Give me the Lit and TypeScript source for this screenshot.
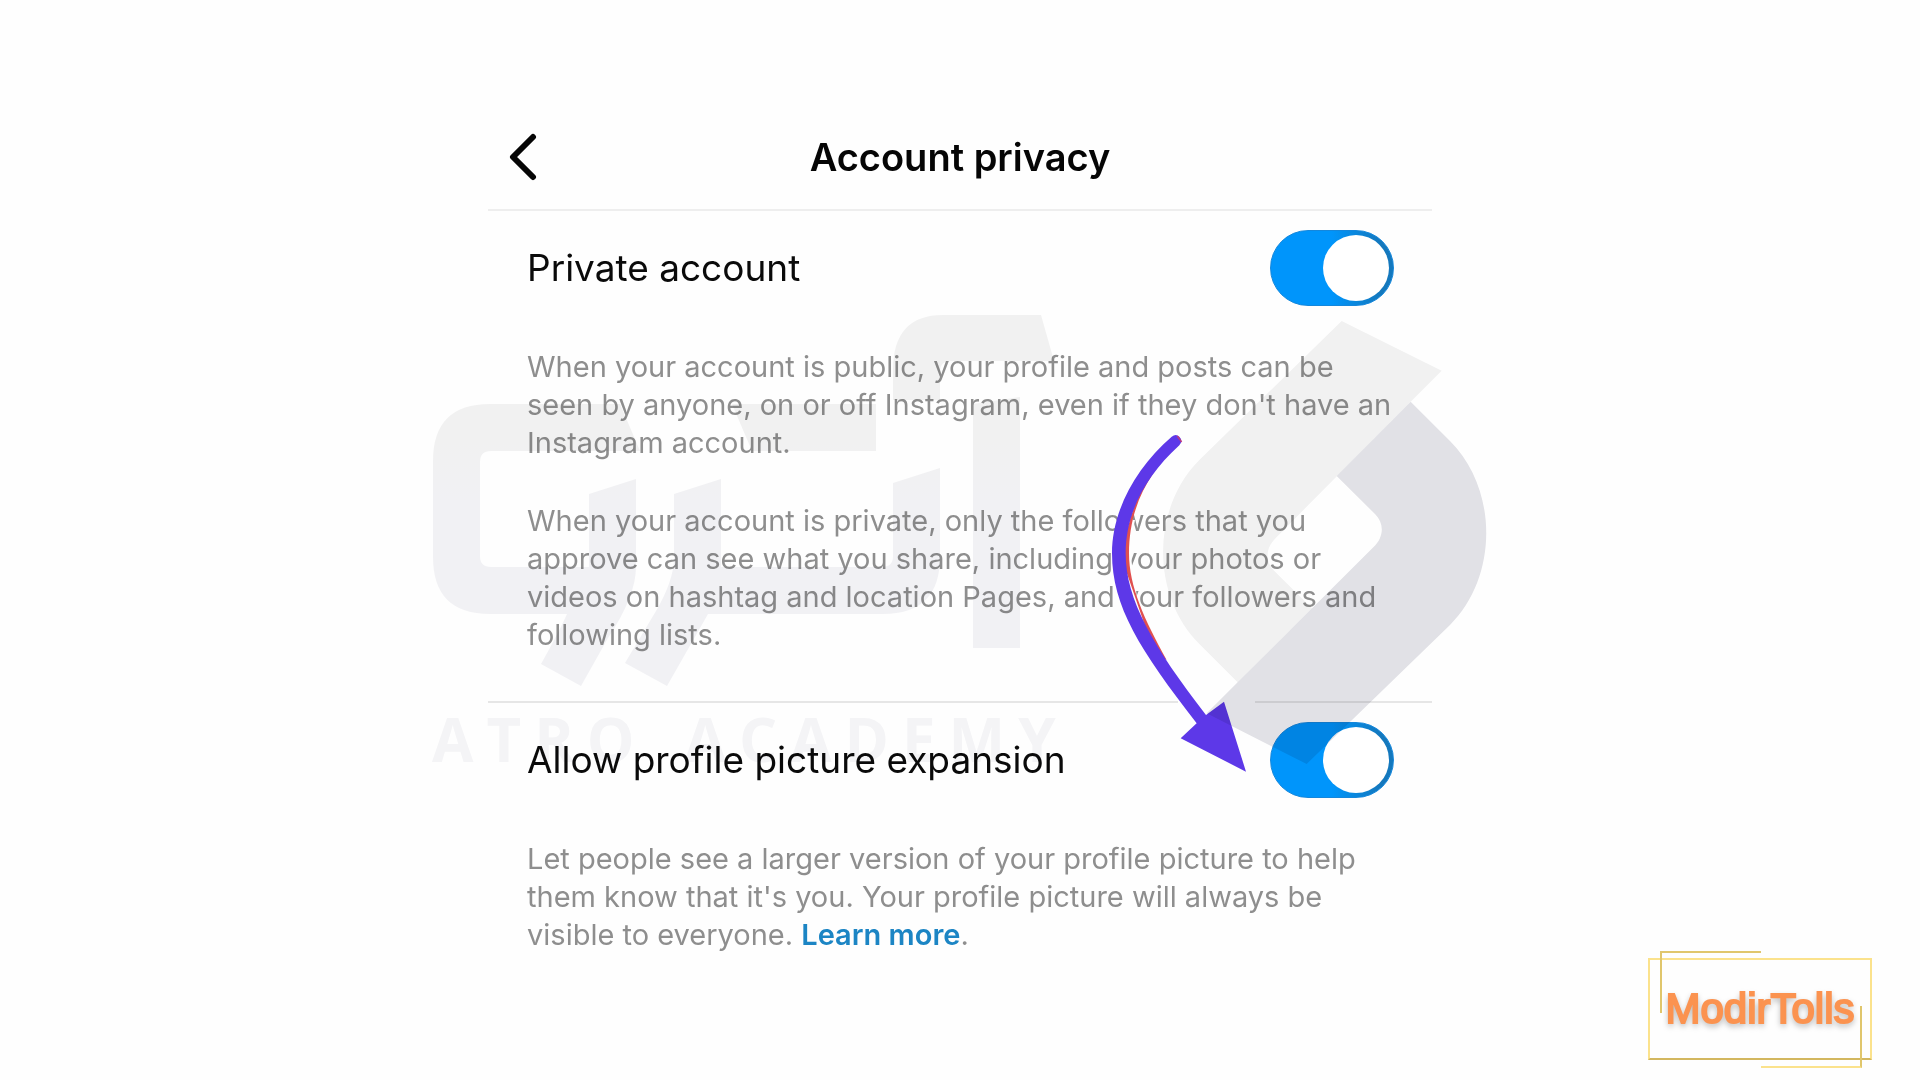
import { LitElement, html, css } from "lit";
import { customElement, property } from "lit/decorators.js";

@customElement("privacy-switch")
class PrivacySwitch extends LitElement {
  @property() label = "";

  static styles = css`
    :host {
      display: block;
    }
    .row {
      display: flex;
      align-items: center;
      justify-content: space-between;
      color: #0a0a0a;
      font-size: 37px;
      line-height: 44px;
    }
    .toggle {
      appearance: none;
      display: flex;
      justify-content: flex-end;
      box-sizing: border-box;
      flex: none;
      width: 124px;
      height: 76px;
      margin: 0;
      padding: 4px;
      border-radius: 38px;
      background: linear-gradient(90deg, #0095fb 50%, #1478bd 90%);
      border: 1px solid #1487dc;
      cursor: pointer;
    }
    .toggle::before {
      content: "";
      width: 66px;
      height: 66px;
      border-radius: 50%;
      background: #fff;
    }
    .toggle:not(:checked) {
      justify-content: flex-start;
      background: #c8c8c8;
      border-color: #bbb;
    }
  `;

  render() {
    return html`
      <div class="row">
        <label for="toggle">${this.label}</label>
        <input id="toggle" class="toggle" type="checkbox" role="switch" checked />
      </div>
    `;
  }
}

@customElement("academy-watermark")
class AcademyWatermark extends LitElement {
  static styles = css`
    :host {
      display: block;
    }
    .mark {
      display: block;
      width: 100%;
    }
    .name {
      position: absolute;
      left: 0;
      top: 399px;
      display: flex;
      gap: 50px;
      font: 700 60px/60px "Open Sans", sans-serif;
      color: #f5f5f7;
    }
    .word {
      display: flex;
      gap: 13px;
    }
  `;

  render() {
    return html`
      <svg class="mark" viewBox="432 310 1060 460" aria-hidden="true">
        <defs>
          <linearGradient id="fade" gradientUnits="userSpaceOnUse" x1="0" y1="440" x2="0" y2="500">
            <stop offset="0" stop-color="#f2f2f2" />
            <stop offset="1" stop-color="#f2f2f5" />
          </linearGradient>
        </defs>
        <g fill="url(#fade)">
          <path
            d="M636 479L589 494V567H491Q480 567 480 556V462Q480 451 491 451H640Q629 425 620 404H490Q433 404 433 461V557Q433 614 490 614H567Q560 630 541 664L581 686L608 638Q636 596 636 567Z"
          />
          <path
            d="M721 479L674 494V560Q673 582 656 611L625 663L667 686L708 614H883Q940 614 940 557V468L893 483V556Q893 567 882 567H721Z"
          />
          <path d="M732 404H876V451H752Z" />
          <path d="M893 400V370Q893 315 943 315H1041L1054 361H951Q940 361 940 372V400Z" />
          <path d="M973 404L1020 397V648H973Z" />
        </g>
        <g transform="translate(1140 310) scale(.33333)">
          <path
            fill="#f2f2f2"
            d="M296 1120L178 1002C33 857 33 595 178 450L605 33L905 182L812 275L408 683C375 715 375 755 403 783L518 897Z"
          />
          <path
            fill="#e2e2e7"
            d="M812 275L930 393C1075 538 1075 800 930 945L500 1362L200 1210L290 1120L700 712C733 680 733 640 705 612L590 498Z"
          />
        </g>
      </svg>
      <div class="name" aria-hidden="true">
        ${["ATRO", "ACADEMY"].map(
          (word) => html`<div class="word">${[...word].map((c) => html`<span>${c}</span>`)}</div>`
        )}
      </div>
    `;
  }
}

@customElement("brand-badge")
class BrandBadge extends LitElement {
  static styles = css`
    :host {
      display: block;
    }
    .badge {
      position: relative;
      display: grid;
      place-items: center;
      box-sizing: border-box;
      width: 224px;
      height: 102px;
      border: 2px solid #fbe28c;
      border-bottom-color: #d3b75f;
      font: 42px/48px "Liberation Sans", Arial, sans-serif;
      color: #fb9350;
      -webkit-text-stroke: 2px #fb9350;
      text-shadow: 0 3px 6px rgba(0, 0, 0, 0.4);
    }
    .corner {
      position: absolute;
      box-sizing: border-box;
      width: 101px;
      height: 62px;
      border: 0 solid #e0c66c;
    }
    .start {
      left: 10px;
      top: -9px;
      border-width: 2px 0 0 2px;
    }
    .end {
      right: 8px;
      bottom: -10px;
      border-width: 0 2px 2px 0;
      border-bottom-color: #fbe28c;
    }
  `;

  render() {
    return html`
      <div class="badge">
        <span class="corner start"></span>
        <span>ModirTolls</span>
        <span class="corner end"></span>
      </div>
    `;
  }
}

@customElement("app-root")
class AppRoot extends LitElement {
  static styles = css`
    :host {
      display: block;
      position: relative;
      min-height: 100vh;
      box-sizing: border-box;
      padding-top: 104px;
      background: #fefefe;
      font-family: Inter, "Liberation Sans", sans-serif;
      overflow: hidden;
    }
    .screen {
      position: relative;
      max-width: 944px;
      margin: 0 auto;
    }
    .header {
      display: grid;
      grid-template-columns: 60px 1fr 60px;
      align-items: center;
      height: 105px;
      border-bottom: 2px solid #eee;
    }
    .back {
      display: block;
      padding: 0 0 0 20px;
      border: 0;
      background: none;
      cursor: pointer;
    }
    .back svg {
      display: block;
      width: 32px;
      height: 48px;
    }
    .title {
      margin: 0;
      text-align: center;
      font-size: 38px;
      line-height: 44px;
      font-weight: 600;
      color: #050505;
    }
    .section {
      padding: 19px 38px 47px 39px;
    }
    .rule {
      display: flex;
      gap: 77px;
    }
    .rule span {
      height: 2px;
      background: #e6e6e6;
      flex: 690 1 0;
    }
    .rule span + span {
      flex: 177 1 0;
    }
    .copy {
      display: flex;
      flex-direction: column;
      gap: 40px;
      margin-top: 42px;
      color: #8e8e8e;
      font-size: 29px;
      line-height: 38px;
      white-space: nowrap;
    }
    .copy p {
      margin: 0;
    }
    .copy a {
      color: #1c85c4;
      font-weight: 600;
      text-decoration: none;
    }
    .arrow {
      position: absolute;
      left: 602px;
      top: 316px;
      width: 200px;
      height: 380px;
      pointer-events: none;
    }
    .watermark {
      position: absolute;
      left: -56px;
      top: 206px;
      width: 1060px;
      mix-blend-mode: multiply;
      pointer-events: none;
    }
    .brand {
      position: absolute;
      right: 48px;
      bottom: 20px;
    }
  `;

  render() {
    return html`
      <main class="screen">
        <header class="header">
          <button class="back" aria-label="Back">
            <svg viewBox="0 0 32 48" fill="none" stroke="#050505" stroke-width="6" stroke-linecap="round" stroke-linejoin="round">
              <path d="M25 4L5 24L25 44" />
            </svg>
          </button>
          <h1 class="title">Account privacy</h1>
        </header>
        <section class="section">
          <privacy-switch label="Private account"></privacy-switch>
          <div class="copy">
            <p>
              When your account is public, your profile and posts can be<br />seen by anyone, on or off
              Instagram, even if they don't have an<br />Instagram account.
            </p>
            <p>
              When your account is private, only the followers that you<br />approve can see what you share,
              including your photos or<br />videos on hashtag and location Pages, and your followers and<br />following
              lists.
            </p>
          </div>
        </section>
        <div class="rule"><span></span><span></span></div>
        <section class="section">
          <privacy-switch label="Allow profile picture expansion"></privacy-switch>
          <div class="copy">
            <p>
              Let people see a larger version of your profile picture to help<br />them know that it's you. Your
              profile picture will always be<br />visible to everyone. <a href="#learn-more">Learn more</a>.
            </p>
          </div>
        </section>
        <svg class="arrow" viewBox="0 0 600 1140" aria-hidden="true">
          <path
            fill="#fefefe"
            d="M110 300H135Q112 400 135 480L145 575H110Z"
          />
          <path
            fill="#e0504f"
            d="M190 160C142 230 117 310 117 400C117 500 164 600 230 720L190 690L90 400L150 200Z"
          />
          <path
            fill="#5d38e8"
            d="M245 50Q258 40 268 50Q280 62 268 76C165 170 107 280 107 400C107 540 190 680 348 885L402 845L468 1055L272 955L320 910C150 690 66 560 66 400C66 270 140 140 245 50Z"
          />
          <path fill="none" stroke="#c33a7a" stroke-width="4" d="M262 48L275 66" />
        </svg>
        <academy-watermark class="watermark"></academy-watermark>
      </main>
      <brand-badge class="brand"></brand-badge>
    `;
  }
}
